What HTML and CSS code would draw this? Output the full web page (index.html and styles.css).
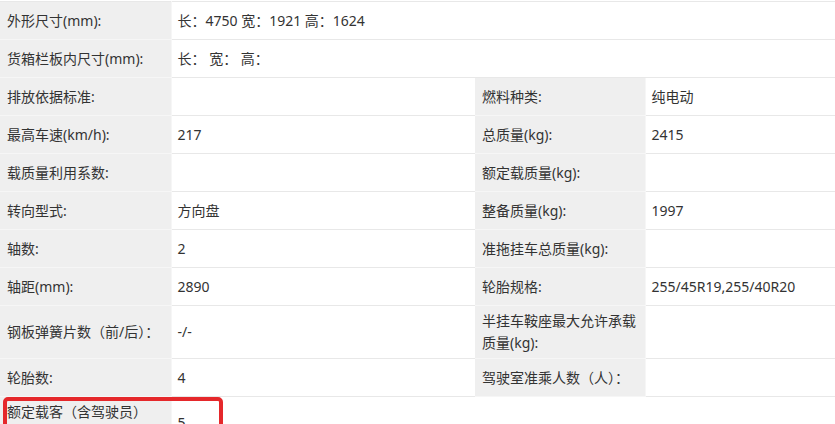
FILE: index.html
```html
<!DOCTYPE html>
<html lang="zh-CN">
<head>
<meta charset="utf-8">
<title>车辆参数</title>
<link rel="stylesheet" href="styles.css">
</head>
<body>
<div class="page">
  <table class="spec">
    <colgroup>
      <col class="c-l1"><col class="c-v1"><col class="c-l2"><col class="c-v2">
    </colgroup>
    <tbody>
      <tr><td class="lab">外形尺寸(mm):</td><td class="val" colspan="3">长：4750 宽：1921 高：1624</td></tr>
      <tr><td class="lab">货箱栏板内尺寸(mm):</td><td class="val" colspan="3">长：&nbsp;宽：&nbsp;高：</td></tr>
      <tr><td class="lab">排放依据标准:</td><td class="val"></td><td class="lab">燃料种类:</td><td class="val">纯电动</td></tr>
      <tr><td class="lab">最高车速(km/h):</td><td class="val">217</td><td class="lab">总质量(kg):</td><td class="val">2415</td></tr>
      <tr><td class="lab">载质量利用系数:</td><td class="val"></td><td class="lab">额定载质量(kg):</td><td class="val"></td></tr>
      <tr><td class="lab">转向型式:</td><td class="val">方向盘</td><td class="lab">整备质量(kg):</td><td class="val">1997</td></tr>
      <tr><td class="lab">轴数:</td><td class="val">2</td><td class="lab">准拖挂车总质量(kg):</td><td class="val"></td></tr>
      <tr><td class="lab">轴距(mm):</td><td class="val">2890</td><td class="lab">轮胎规格:</td><td class="val">255/45R19,255/40R20</td></tr>
      <tr><td class="lab">钢板弹簧片数（前/后）：</td><td class="val">-/-</td><td class="lab wrap">半挂车鞍座最大允许承载质量(kg):</td><td class="val"></td></tr>
      <tr><td class="lab">轮胎数:</td><td class="val">4</td><td class="lab">驾驶室准乘人数（人）：</td><td class="val"></td></tr>
      <tr><td class="lab wrap">额定载客（含驾驶员）(人)：</td><td class="val">5</td><td class="empty" colspan="2"></td></tr>
    </tbody>
  </table>
  <div class="mark"></div>
</div>
</body>
</html>
```

FILE: styles.css
```css
html, body {
  margin: 0;
  padding: 0;
  background: #ffffff;
}
.page {
  position: relative;
  width: 835px;
  height: 424px;
  overflow: hidden;
  padding-top: 1px;
  box-sizing: border-box;
}
.spec {
  width: 835px;
  table-layout: fixed;
  border-collapse: collapse;
  border-top: 1px solid #e8e8e8;
  font-family: "Noto Sans", "Noto Sans CJK SC", sans-serif;
  font-size: 14px;
  color: #333333;
}
.c-l1 { width: 171px; }
.c-v1 { width: 304px; }
.c-l2 { width: 170px; }
.c-v2 { width: 190px; }
.spec td {
  height: 38px;
  padding: 4px 6px 4px 7px;
  line-height: 22px;
  vertical-align: middle;
  box-sizing: border-box;
  border-bottom: 1px solid #e8e8e8;
  white-space: nowrap;
}
.spec td.lab {
  background: #efefef;
  border-bottom-color: #f6f6f6;
  border-right: 1px solid #f6f6f6;
}
.spec td.val {
  background: #ffffff;
  padding-left: 6px;
}
.spec td.wrap {
  white-space: normal;
}
.spec td.empty {
  background: #ffffff;
  border-bottom: none;
}
.mark {
  position: absolute;
  left: 3px;
  top: 397px;
  width: 220px;
  height: 50px;
  border: 4px solid #e5282b;
  border-radius: 5px;
  box-sizing: border-box;
}
```
